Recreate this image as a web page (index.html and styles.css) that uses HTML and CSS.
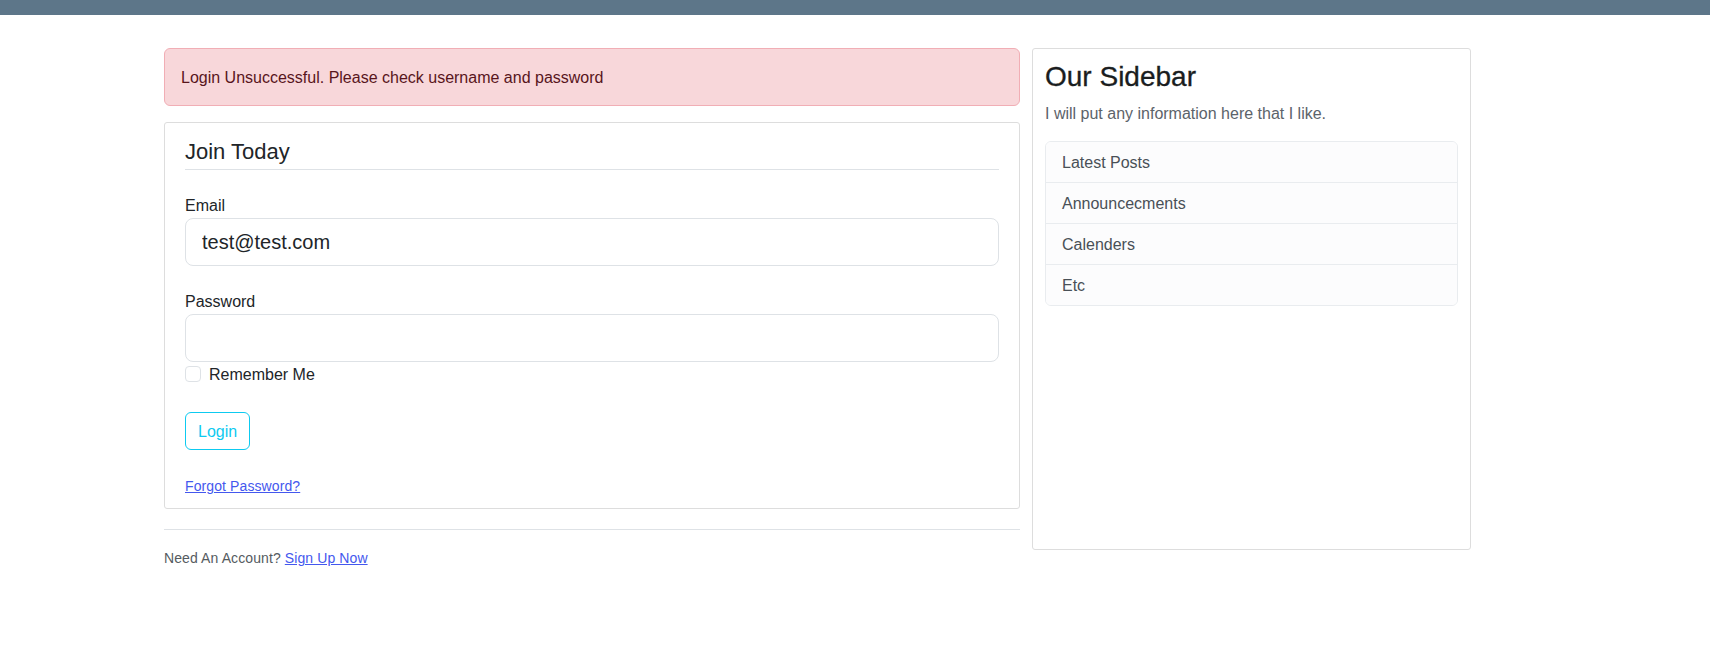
FILE: index.html
```html
<!DOCTYPE html>
<html lang="en">
<head>
<meta charset="utf-8">
<title>Login</title>
<link rel="stylesheet" href="styles.css">
</head>
<body>
  <header class="topbar"></header>
  <main class="container">
    <div class="main-col">
      <div class="alert">Login Unsuccessful. Please check username and password</div>
      <div class="content-section">
        <form class="login-form">
          <fieldset class="fieldset">
            <legend class="legend">Join Today</legend>
            <div class="form-group">
              <label class="form-label" for="email">Email</label>
              <input class="form-control" id="email" type="text" value="test@test.com">
            </div>
            <div class="form-group form-group-last">
              <label class="form-label" for="password">Password</label>
              <input class="form-control" id="password" type="password">
            </div>
            <div class="form-check">
              <span class="check-box"></span>
              <span class="check-label">Remember Me</span>
            </div>
          </fieldset>
          <div class="btn-group">
            <button type="button" class="btn-outline">Login</button>
          </div>
          <div class="small-line"><small><a class="link" href="#">Forgot Password?</a></small></div>
        </form>
      </div>
      <div class="account-line">
        <small class="muted">Need An Account? <a class="link" href="#">Sign Up Now</a></small>
      </div>
    </div>
    <aside class="sidebar">
      <h3 class="sidebar-title">Our Sidebar</h3>
      <p class="sidebar-text">I will put any information here that I like.</p>
      <ul class="list-group">
        <li class="list-item">Latest Posts</li>
        <li class="list-item">Announcecments</li>
        <li class="list-item">Calenders</li>
        <li class="list-item">Etc</li>
      </ul>
    </aside>
  </main>
</body>
</html>
```

FILE: styles.css
```css
* { box-sizing: border-box; }

body {
  margin: 0;
  background: #ffffff;
  color: #212529;
  font-family: "Liberation Sans", Arial, sans-serif;
  font-size: 16px;
  line-height: 1.5;
}

.topbar {
  height: 15px;
  background: #5d7689;
}

.container {
  display: flex;
  align-items: flex-start;
  gap: 12px;
  padding-top: 33px;
  margin-left: 164px;
}

.main-col {
  width: 856px;
}

.alert {
  height: 58px;
  padding: 17px 16px 15px;
  background: #f8d7da;
  border: 1px solid #f1aeb5;
  border-radius: 6px;
  color: #58151c;
  margin-bottom: 16px;
}

.content-section {
  background: #fff;
  border: 1px solid #dddddd;
  border-radius: 3px;
  padding: 10px 20px;
  margin-bottom: 20px;
}

.login-form { margin: 0; }

.fieldset {
  border: 0;
  margin: 0;
  padding: 0;
  min-width: 0;
}

.legend {
  display: block;
  width: 100%;
  float: left;
  padding: 6px 0 4px;
  font-size: 22px;
  line-height: 26px;
  color: #212529;
  border-bottom: 1px solid #dee2e6;
  margin-bottom: 24px;
}

.legend + * { clear: left; }

.form-group {
  margin-bottom: 24px;
}

.form-group-last { margin-bottom: 0; }

.form-label {
  display: block;
  line-height: 24px;
}

.form-control {
  display: block;
  width: 100%;
  height: 48px;
  padding: 8px 16px;
  font-family: inherit;
  font-size: 20px;
  line-height: 30px;
  color: #212529;
  background: #fff;
  border: 1px solid #dee2e6;
  border-radius: 8px;
  outline: none;
}

.form-check {
  display: flex;
  align-items: flex-start;
  height: 24px;
  margin-bottom: 26px;
  padding-top: 1px;
}

.check-box {
  width: 16px;
  height: 16px;
  margin-top: 3px;
  border: 1px solid #dee2e6;
  border-radius: 4px;
  background: #fff;
  flex: none;
}

.check-label {
  margin-left: 8px;
}

.btn-group {
  margin-bottom: 24px;
}

.btn-outline {
  display: inline-block;
  height: 38px;
  padding: 6px 12px;
  font-family: inherit;
  font-size: 16px;
  line-height: 25px;
  color: #0dcaf0;
  background: transparent;
  border: 1px solid #0dcaf0;
  border-radius: 6px;
  cursor: pointer;
}

.small-line {
  line-height: 24px;
}

small { font-size: 14px; letter-spacing: 0.1px; }

.link {
  color: #4458ee;
  text-decoration: underline;
}

.account-line {
  border-top: 1px solid #dee2e6;
  padding-top: 16px;
  line-height: 24px;
}

.muted { color: #555b61; }

.sidebar {
  width: 439px;
  min-height: 502px;
  background: #fff;
  border: 1px solid #dddddd;
  border-radius: 3px;
  padding: 11px 12px 10px 12px;
}

.sidebar-title {
  margin: 0 0 8px;
  font-size: 28px;
  line-height: 1.2;
  font-weight: 500;
  color: #1a1d20;
  -webkit-text-stroke: 0.3px #1a1d20;
}

.sidebar-text {
  margin: 0 0 15px;
  color: #5c636a;
}

.list-group {
  list-style: none;
  margin: 0;
  padding: 0;
  border: 1px solid #e9ecef;
  border-radius: 6px;
  overflow: hidden;
}

.list-item {
  padding: 9px 16px 7px;
  line-height: 24px;
  background: #fcfcfd;
  color: #495057;
  border-top: 1px solid #e9ecef;
}

.list-item:first-child { border-top: 0; }
```
